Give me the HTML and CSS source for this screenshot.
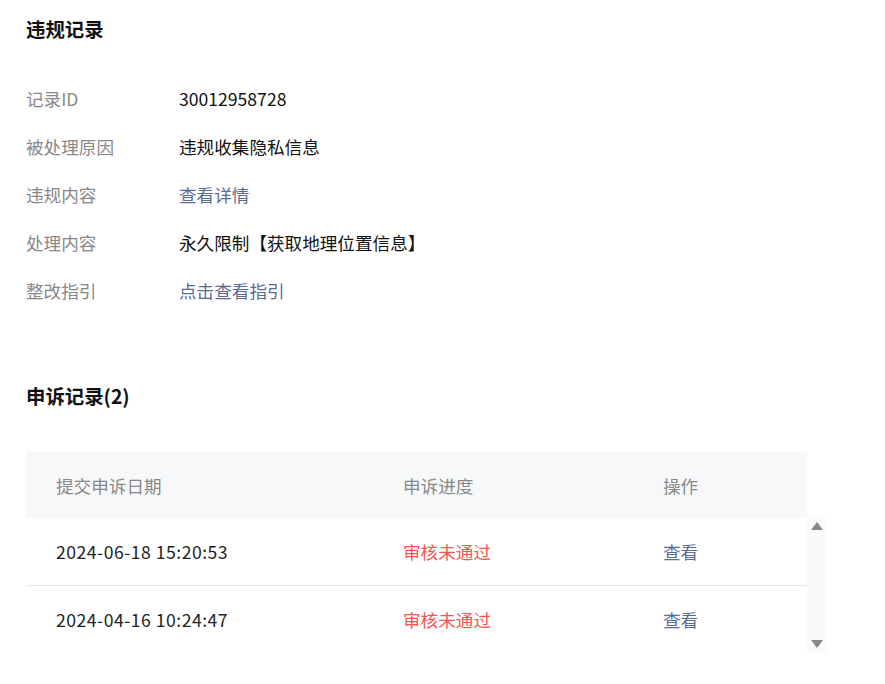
FILE: index.html
```html
<!DOCTYPE html>
<html lang="zh">
<head>
<meta charset="utf-8">
<title>违规记录</title>
<link rel="stylesheet" href="styles.css">
</head>
<body>
<div class="page">
  <h2 class="title">违规记录</h2>
  <div class="info">
    <div class="row"><span class="label">记录ID</span><span class="value">30012958728</span></div>
    <div class="row"><span class="label">被处理原因</span><span class="value">违规收集隐私信息</span></div>
    <div class="row"><span class="label">违规内容</span><a class="value link">查看详情</a></div>
    <div class="row"><span class="label">处理内容</span><span class="value">永久限制【获取地理位置信息】</span></div>
    <div class="row"><span class="label">整改指引</span><a class="value link">点击查看指引</a></div>
  </div>

  <h2 class="title title2">申诉记录(2)</h2>
  <div class="table">
    <div class="thead">
      <div class="cell">提交申诉日期</div>
      <div class="cell">申诉进度</div>
      <div class="cell">操作</div>
    </div>
    <div class="tbody-wrap">
      <div class="tbody">
        <div class="tr">
          <div class="cell date">2024-06-18 15:20:53</div>
          <div class="cell fail">审核未通过</div>
          <div class="cell link">查看</div>
        </div>
        <div class="tr">
          <div class="cell date">2024-04-16 10:24:47</div>
          <div class="cell fail">审核未通过</div>
          <div class="cell link">查看</div>
        </div>
      </div>
      <div class="scrollbar">
        <span class="arrow up"></span>
        <span class="arrow down"></span>
      </div>
    </div>
  </div>
</div>
</body>
</html>
```

FILE: styles.css
```css
* { box-sizing: border-box; }
html, body { margin: 0; padding: 0; background: #fff; }
body {
  font-family: "Noto Sans CJK SC", "Noto Sans", sans-serif;
  font-size: 17.6px;
  color: #1a1a1a;
}
.page {
  padding: 15px 0 0 26px;
  width: 885px;
}
.title {
  margin: 0;
  font-size: 19.4px;
  font-weight: 700;
  line-height: 28px;
  color: #111;
}
.info {
  margin-top: 31px;
  display: flex;
  flex-direction: column;
}
.row {
  display: flex;
  align-items: center;
  height: 48px;
}
.label {
  width: 153px;
  color: #888;
}
.value { color: #111; }
.link { color: #576b95; text-decoration: none; }
.title2 { margin-top: 68px; }

.table {
  margin-top: 42px;
  width: 800px;
}
.thead {
  width: 781px;
  height: 66px;
  background: #f7f8fa;
  display: grid;
  grid-template-columns: 347px 260px 1fr;
  align-items: center;
  color: #888;
}
.cell { padding-left: 30px; }
.tbody-wrap {
  display: flex;
  align-items: flex-start;
}
.tbody { width: 781px; }
.tr {
  display: grid;
  grid-template-columns: 347px 260px 1fr;
  align-items: center;
  height: 67px;
}
.tr + .tr {
  border-top: 1px solid #e6e6e6;
  height: 68px;
}
.date { color: #1f1f1f; letter-spacing: 0.5px; }
.fail { color: #fa5151; }
.scrollbar {
  width: 19px;
  height: 137px;
  margin-top: -2px;
  background: #fafafa;
  display: flex;
  flex-direction: column;
  justify-content: space-between;
  align-items: center;
  padding: 6px 0 5px;
}
.arrow {
  width: 0;
  height: 0;
  border-left: 6px solid transparent;
  border-right: 6px solid transparent;
}
.arrow.up { border-bottom: 8px solid #888; }
.arrow.down { border-top: 8px solid #888; }
```
